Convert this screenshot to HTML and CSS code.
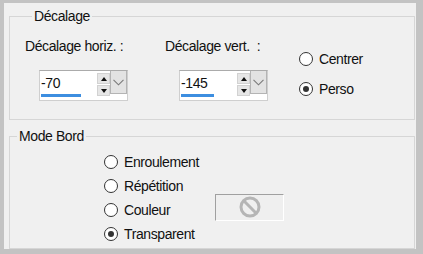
FILE: index.html
```html
<!DOCTYPE html>
<html lang="fr">
<head>
  <meta charset="UTF-8">
  <title>Décalage</title>
  <link rel="stylesheet" href="styles.css">
</head>
<body>
  <div class="window">
    <fieldset class="group group-offset">
      <legend>Décalage</legend>
      <div class="offset-row">
        <div class="offset-col col-h">
          <div class="label">Décalage horiz. :</div>
          <div class="spin">
            <div class="spin-field">
              <span class="spin-value">-70</span>
              <div class="spin-track"><div class="spin-bar" style="width: 40px"></div></div>
            </div>
            <div class="spin-btns">
              <div class="spin-btn"><span class="tri-up"></span></div>
              <div class="spin-btn"><span class="tri-down"></span></div>
            </div>
            <div class="spin-drop">
              <svg width="11" height="7" viewBox="0 0 11 7"><path d="M0.5 0.8 L5.5 5.8 L10.5 0.8" fill="none" stroke="#7a7a7a" stroke-width="1.1"/></svg>
            </div>
          </div>
        </div>
        <div class="offset-col col-v">
          <div class="label">Décalage vert. &nbsp;:</div>
          <div class="spin">
            <div class="spin-field">
              <span class="spin-value">-145</span>
              <div class="spin-track"><div class="spin-bar" style="width: 33px"></div></div>
            </div>
            <div class="spin-btns">
              <div class="spin-btn"><span class="tri-up"></span></div>
              <div class="spin-btn"><span class="tri-down"></span></div>
            </div>
            <div class="spin-drop">
              <svg width="11" height="7" viewBox="0 0 11 7"><path d="M0.5 0.8 L5.5 5.8 L10.5 0.8" fill="none" stroke="#7a7a7a" stroke-width="1.1"/></svg>
            </div>
          </div>
        </div>
        <div class="radio-col">
          <div class="radio-row"><span class="radio"></span>Centrer</div>
          <div class="radio-row"><span class="radio checked"></span>Perso</div>
        </div>
      </div>
    </fieldset>

    <fieldset class="group group-mode">
      <legend>Mode Bord</legend>
      <div class="mode-list">
        <div class="mode-row"><span class="radio"></span>Enroulement</div>
        <div class="mode-row"><span class="radio"></span>Répétition</div>
        <div class="mode-row">
          <span class="radio"></span>Couleur
          <div class="color-btn">
            <svg width="24" height="24" viewBox="0 0 24 24">
              <circle cx="12" cy="12" r="9" fill="none" stroke="#b5b5b5" stroke-width="3"/>
              <path d="M5.8 5.8 L18.2 18.2" stroke="#b5b5b5" stroke-width="3"/>
            </svg>
          </div>
        </div>
        <div class="mode-row"><span class="radio checked"></span>Transparent</div>
      </div>
    </fieldset>
  </div>
</body>
</html>
```

FILE: styles.css
```css
body {
  margin: 0;
  font-family: "Liberation Sans", Arial, sans-serif;
  font-size: 14px;
  letter-spacing: -0.4px;
  color: #111;
}

.window {
  width: 412px;
  height: 246px;
  border-style: solid;
  border-color: #c3c3c3;
  border-width: 3px 7px 5px 4px;
  background-color: #f0f0f0;
  display: flex;
  flex-direction: column;
}

.group {
  margin: 6px 1px 0 5px;
  padding: 0;
  border: 1px solid #d6d6d6;
  min-width: 0;
}

.group legend {
  margin-left: 7px;
  padding: 0 2px;
  line-height: 15px;
}

.group-offset {
  padding: 15px 0 18px 15px;
}

.group-mode {
  margin-top: 9px;
  padding: 6px 0 2px 0;
  flex: 1;
}

.mode-list {
  padding-left: 94px;
}

.offset-row {
  display: flex;
}

.offset-col {
  display: flex;
  flex-direction: column;
}

.col-h {
  width: 140px;
}

.col-v {
  width: 134px;
}

.label {
  line-height: 15px;
  height: 15px;
}

.spin {
  margin: 16px 0 0 14px;
  width: 87px;
  height: 29px;
  border: 1px solid #cfcfcf;
  border-top-color: #ababab;
  background: #fff;
  display: flex;
}

.spin-field {
  width: 57px;
  display: flex;
  flex-direction: column;
}

.spin-value {
  flex: 1;
  padding: 4px 0 0 1px;
  line-height: 16px;
}

.spin-track {
  height: 3px;
  margin: 0 0 3px 1px;
}

.spin-bar {
  height: 3px;
  background: #3d8ee0;
}

.spin-btns {
  width: 13px;
  padding-top: 2px;
  display: flex;
  flex-direction: column;
  gap: 1px;
}

.spin-btn {
  width: 11px;
  height: 9px;
  background: #e6e6e6;
  border: 1px solid #d2d2d2;
  display: flex;
  align-items: center;
  justify-content: center;
}

.tri-up {
  width: 0;
  height: 0;
  border-left: 3px solid transparent;
  border-right: 3px solid transparent;
  border-bottom: 4px solid #111;
}

.tri-down {
  width: 0;
  height: 0;
  border-left: 3px solid transparent;
  border-right: 3px solid transparent;
  border-top: 4px solid #111;
}

.spin-drop {
  width: 15px;
  height: 22px;
  background: #e3e3e3;
  border: 1px solid #b4b4b4;
  border-top: none;
  display: flex;
  align-items: center;
  justify-content: center;
}

.radio-col {
  margin-top: 10px;
  display: flex;
  flex-direction: column;
  gap: 10px;
}

.radio-row,
.mode-row {
  display: flex;
  align-items: center;
  height: 20px;
}

.mode-row {
  height: 24px;
}

.radio {
  width: 12px;
  height: 12px;
  border: 1px solid #333;
  border-radius: 50%;
  background: #fff;
  margin-right: 6px;
  display: flex;
  align-items: center;
  justify-content: center;
  flex-shrink: 0;
}

.radio.checked::after {
  content: "";
  width: 6px;
  height: 6px;
  border-radius: 50%;
  background: #333;
}

.color-btn {
  width: 67px;
  height: 25px;
  margin: -5px 0 1px 45px;
  border-top: 1px solid #a0a0a0;
  border-left: 1px solid #a0a0a0;
  border-right: 1px solid #fff;
  border-bottom: 1px solid #fff;
  background: #efefef;
  display: flex;
  align-items: center;
  justify-content: center;
}
```
